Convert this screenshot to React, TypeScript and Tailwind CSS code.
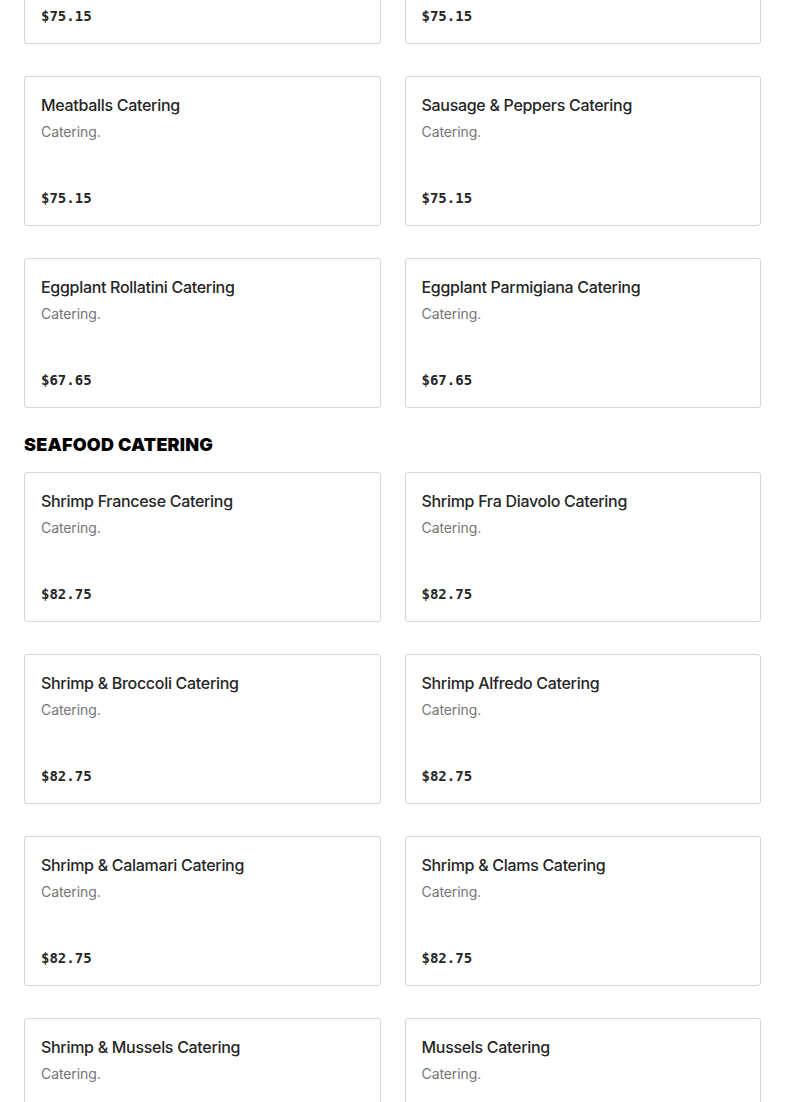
type Item = { name: string; price: string }

const beforeItems: Item[] = [
  { name: 'Chicken Parmigiana Catering', price: '$75.15' },
  { name: 'Chicken Marsala Catering', price: '$75.15' },
  { name: 'Meatballs Catering', price: '$75.15' },
  { name: 'Sausage & Peppers Catering', price: '$75.15' },
  { name: 'Eggplant Rollatini Catering', price: '$67.65' },
  { name: 'Eggplant Parmigiana Catering', price: '$67.65' },
]

const seafood: Item[] = [
  { name: 'Shrimp Francese Catering', price: '$82.75' },
  { name: 'Shrimp Fra Diavolo Catering', price: '$82.75' },
  { name: 'Shrimp & Broccoli Catering', price: '$82.75' },
  { name: 'Shrimp Alfredo Catering', price: '$82.75' },
  { name: 'Shrimp & Calamari Catering', price: '$82.75' },
  { name: 'Shrimp & Clams Catering', price: '$82.75' },
  { name: 'Shrimp & Mussels Catering', price: '$82.75' },
  { name: 'Mussels Catering', price: '$82.75' },
]

function MenuCard({ item }: { item: Item }) {
  return (
    <div className="h-[150px] rounded-[3px] border border-[#d6d6d6] bg-white p-4 flex flex-col">
      <h4 className="text-[16px] leading-6 font-medium text-[#262626] tracking-[-0.3px]">{item.name}</h4>
      <p className="mt-[3px] text-[14px] leading-6 text-[#767676] tracking-[-0.1px]">Catering.</p>
      <div
        className="mt-auto mb-[2px] text-[14px] leading-[18px] font-bold text-[#262626]"
        style={{ fontFamily: '"DejaVu Sans Mono", "Liberation Mono", monospace' }}
      >
        {item.price}
      </div>
    </div>
  )
}

export default function App() {
  return (
    <div className="h-[1102px] overflow-hidden bg-white" style={{ fontFamily: 'Inter, "Noto Sans", sans-serif' }}>
      <div className="px-6 -mt-[106px]">
        <div className="grid grid-cols-2 gap-x-6 gap-y-8">
          {beforeItems.map((item) => (
            <MenuCard key={item.name} item={item} />
          ))}
        </div>
        <h3 className="mt-[25px] mb-[15px] text-[18px] leading-6 font-black uppercase text-black tracking-[0.2px]">
          Seafood Catering
        </h3>
        <div className="grid grid-cols-2 gap-x-6 gap-y-8">
          {seafood.map((item) => (
            <MenuCard key={item.name} item={item} />
          ))}
        </div>
      </div>
    </div>
  )
}
